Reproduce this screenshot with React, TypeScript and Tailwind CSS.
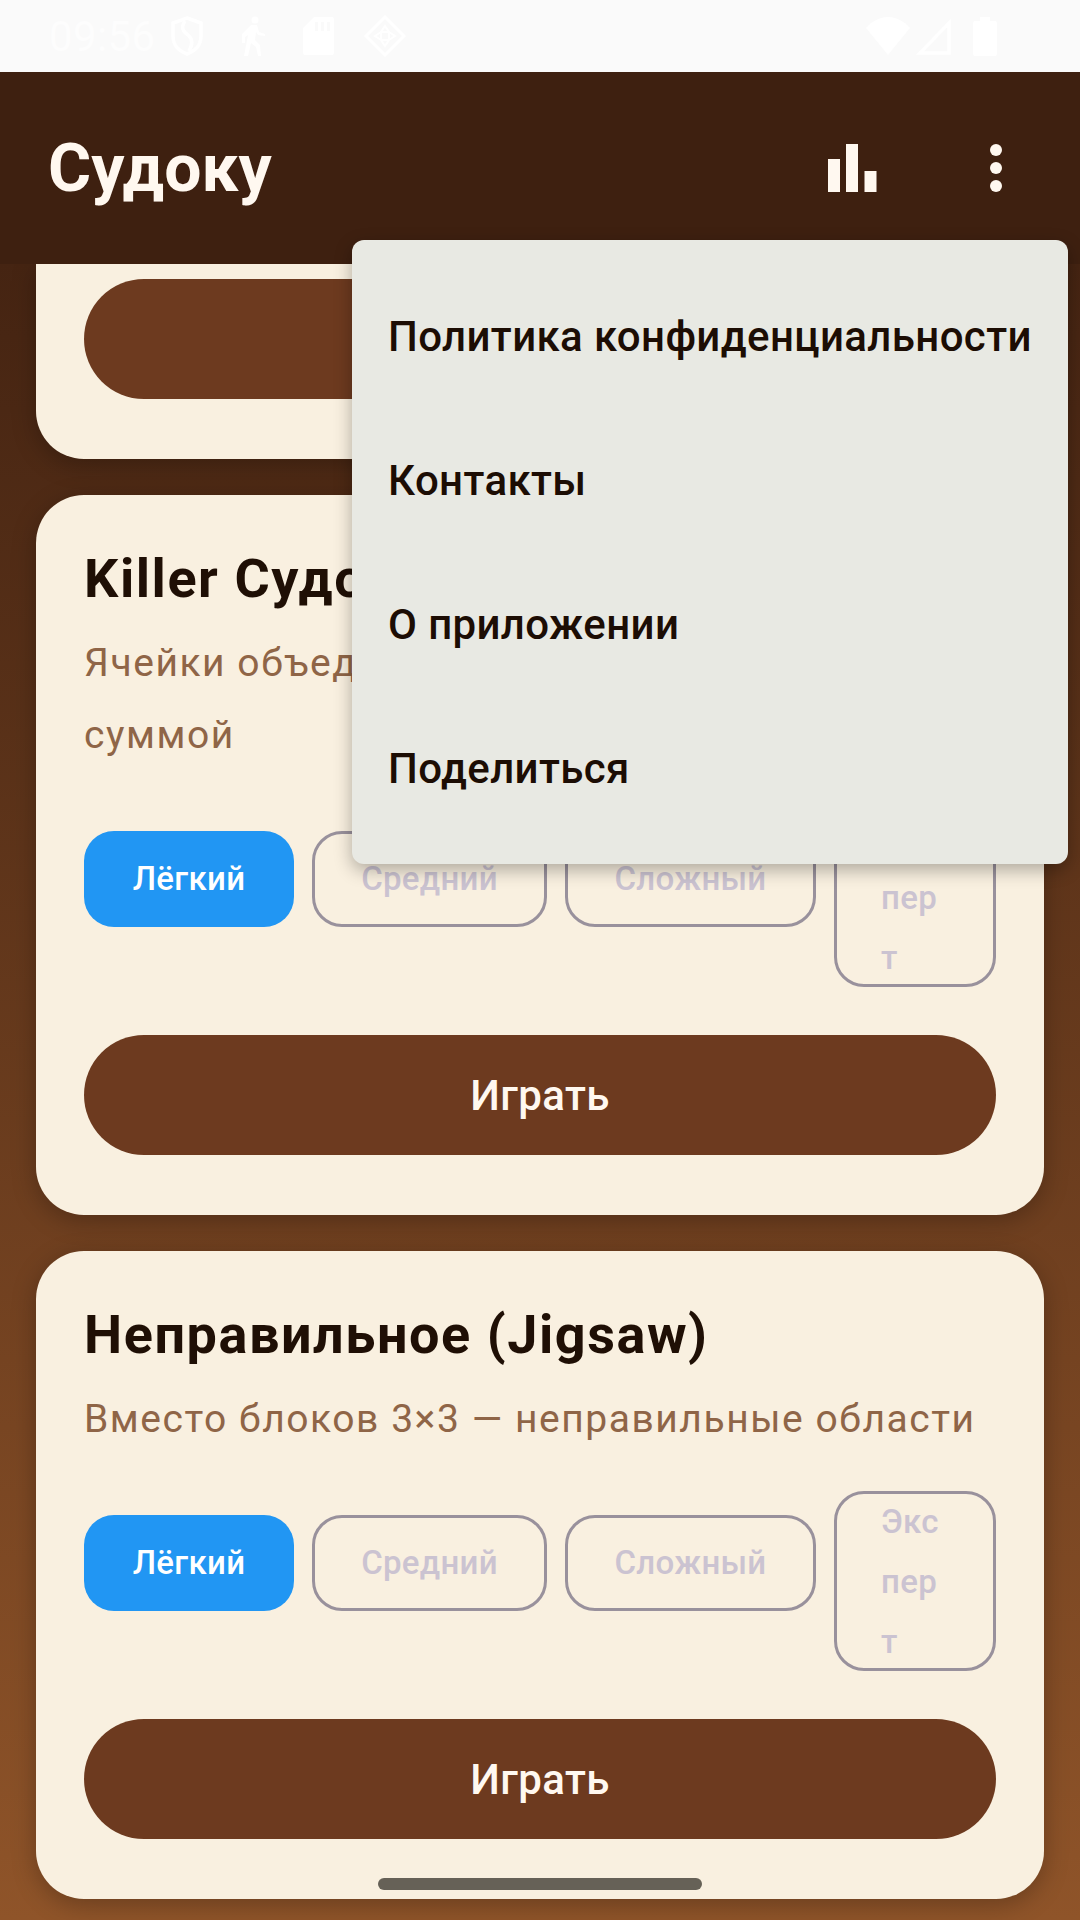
const chipBase = 'mt-6 h-[96px] rounded-[30px] text-[33px] font-medium tracking-[0.3px] flex items-center justify-center'

function Chips() {
  return (
    <div className="flex items-start mb-12">
      <div className={`${chipBase} w-[210px] bg-[#2196f3] text-white`}>Лёгкий</div>
      <div className={`${chipBase} ml-[18px] w-[235px] border-[3px] border-[#99919c] text-[#cbc3d1]`}>Средний</div>
      <div className={`${chipBase} ml-[18px] w-[251px] border-[3px] border-[#99919c] text-[#cbc3d1]`}>Сложный</div>
      <div className="ml-[18px] w-[162px] h-[180px] rounded-[30px] border-[3px] border-[#99919c] text-[#cbc3d1] text-[33px] font-medium tracking-[0.3px] leading-[60px] pl-[44px] pr-[46px] break-all text-left">
        <div className="-mt-[2px]">Эксперт</div>
      </div>
    </div>
  )
}

function PlayButton() {
  return (
    <button className="w-full h-[120px] rounded-full bg-[#6d3a1f] text-[#fff8f0] text-[42px] font-medium tracking-[0.4px]">
      Играть
    </button>
  )
}

function GameCard({ title, children }: { title: string; children: React.ReactNode }) {
  return (
    <div className="bg-[#f9f0e0] rounded-[48px] px-12 pt-[42px] pb-[60px] shadow-[0_6px_24px_rgba(0,0,0,0.25)]">
      <h2 className="text-[54px] font-bold leading-[84px] tracking-[1.55px] text-[#1f0f05] mb-[6px]">{title}</h2>
      <p className="text-[39px] leading-[72px] tracking-[1.55px] text-[#8f6547] mb-9">{children}</p>
      <Chips />
      <PlayButton />
    </div>
  )
}

function StatusBar() {
  return (
    <div className="h-[72px] bg-[#fafafa] flex items-center justify-between pl-[49px] pr-[83px] text-white">
      <div className="flex items-center">
        <span className="text-[42px] w-[122px] tracking-[0.4px] text-[#fdfdfd]">09:56</span>
        <svg width="32" height="40" viewBox="0 0 32 40" fill="none" stroke="#ffffff" strokeWidth="3.5">
          <path d="M16 2 30 7v13c0 9-6 15-14 18C8 35 2 29 2 20V7z" />
          <path d="M14 5c-4 6-3 10 3 14 5 4 5 9 1 16" />
        </svg>
        <svg className="ml-[36px]" width="26" height="40" viewBox="0 0 26 40" fill="#ffffff">
          <circle cx="16" cy="4" r="3.5" />
          <path d="M12 9h6l2 7 6 2v2l-7-1-2-3-1 8 5 5 1 11h-3l-2-9-5-4-3 13H5l4-21-3 2v6H3v-9z" />
        </svg>
        <svg className="ml-[38px]" width="31" height="38" viewBox="0 0 31 38" fill="#ffffff">
          <path d="M11 0h18a2 2 0 0 1 2 2v34a2 2 0 0 1-2 2H2a2 2 0 0 1-2-2V11zM12 5v9h3V5zm6 0v9h3V5zm6 0v9h3V5z" fillRule="evenodd" />
        </svg>
        <svg className="ml-[30px]" width="42" height="42" viewBox="0 0 42 42" fill="none" stroke="#ffffff" strokeWidth="3">
          <path d="M21 2 40 21 21 40 2 21z" />
          <path d="M21 11l4 6h-8zM21 31l-4-6h8zM11 21l6-4v8zM31 21l-6 4v-8z" strokeWidth="2" />
        </svg>
      </div>
      <div className="flex items-center">
        <svg width="44" height="38" viewBox="0 0 44 38" fill="#ffffff">
          <path d="M0 11C6 4 14 0 22 0s16 4 22 11L22 38z" />
        </svg>
        <svg className="ml-[5px]" width="37" height="37" viewBox="0 0 37 37" fill="none" stroke="#ffffff" strokeWidth="3.5">
          <path d="M34 5v30H5z" />
        </svg>
        <svg className="ml-[21px]" width="24" height="39" viewBox="0 0 24 39" fill="#ffffff">
          <path d="M7 0h10v4h5a2 2 0 0 1 2 2v31a2 2 0 0 1-2 2H2a2 2 0 0 1-2-2V6a2 2 0 0 1 2-2h5z" />
        </svg>
      </div>
    </div>
  )
}

function AppBar() {
  return (
    <div className="h-[192px] bg-[#3e2010] flex items-center pl-12 pr-12 text-[#fff8f0]">
      <h1 className="flex-1 text-[66px] font-bold">Судоку</h1>
      <svg width="49" height="48" viewBox="0 0 49 48" fill="#fff8f0">
        <rect x="0" y="15" width="12" height="33" />
        <rect x="18" y="0" width="12" height="48" />
        <rect x="36.5" y="27" width="12" height="21" />
      </svg>
      <svg className="ml-[83px]" width="72" height="72" viewBox="0 0 24 24" fill="#fff8f0">
        <circle cx="12" cy="6" r="2" />
        <circle cx="12" cy="12" r="2" />
        <circle cx="12" cy="18" r="2" />
      </svg>
    </div>
  )
}

function Menu() {
  const items = ['Политика конфиденциальности', 'Контакты', 'О приложении', 'Поделиться']
  return (
    <div className="absolute left-[352px] top-[240px] w-[716px] py-6 rounded-[12px] bg-[#e8e9e3] shadow-[0_6px_18px_rgba(0,0,0,0.3)]">
      {items.map(item => (
        <div key={item} className="h-[144px] flex items-center pl-[36px] text-[42px] font-medium tracking-[0.38px] whitespace-nowrap text-[#1c0d04]">
          {item}
        </div>
      ))}
    </div>
  )
}

export default function App() {
  return (
    <div className="relative w-[1080px] h-[1920px] overflow-hidden font-['Roboto',sans-serif]">
      <StatusBar />
      <AppBar />
      <div className="h-[1656px] overflow-hidden px-9 flex flex-col gap-9 bg-gradient-to-b from-[#452412] to-[#8f5429]">
        {/* first card is scrolled under the app bar */}
        <div className="bg-[#f9f0e0] rounded-b-[48px] px-12 pt-[15px] pb-[60px] shadow-[0_6px_24px_rgba(0,0,0,0.25)]">
          <PlayButton />
        </div>
        <GameCard title="Killer Судоку">
          Ячейки объединены в клетки с заданной
          <br />
          суммой
        </GameCard>
        <GameCard title="Неправильное (Jigsaw)">Вместо блоков 3×3 — неправильные области</GameCard>
      </div>
      <Menu />
      <div className="absolute left-[378px] top-[1878px] w-[324px] h-3 rounded-md bg-[#666157]" />
    </div>
  )
}
